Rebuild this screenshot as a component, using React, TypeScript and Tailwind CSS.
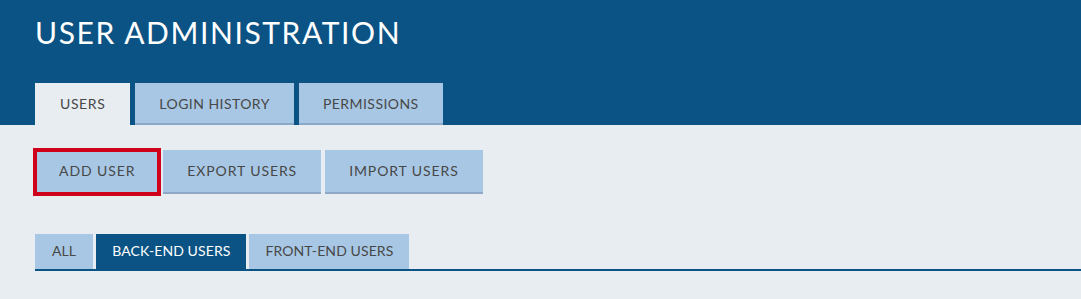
const PAGE_TABS = ["Users", "Login history", "Permissions"]
const ACTIONS = ["Add user", "Export users", "Import users"]
const FILTERS = ["All", "Back-end users", "Front-end users"]

export default function App() {
  const activeTab = "Users"
  const activeFilter = "Back-end users"

  return (
    <div className="min-h-[299px] bg-[#e8edf2] font-['Lato',sans-serif] uppercase text-[#474747]">
      <header className="bg-[#0b5384] px-[35px] pt-[14px]">
        <h1 className="text-[30px] leading-[36px] font-normal tracking-[1.6px] text-white">
          User Administration
        </h1>
        <nav className="mt-[33px] flex gap-[5px]">
          {PAGE_TABS.map((tab) =>
            tab === activeTab ? (
              <button
                key={tab}
                className="bg-[#e8edf2] px-[25px] pt-[11px] pb-[11px] text-sm leading-5 tracking-[0.6px] uppercase"
              >
                {tab}
              </button>
            ) : (
              <button
                key={tab}
                className="border-b-2 border-[#8aa9c9] bg-[#a8c7e4] px-6 pt-[11px] pb-[9px] text-sm leading-5 tracking-[0.45px] uppercase"
              >
                {tab}
              </button>
            )
          )}
        </nav>
      </header>

      <div className="pt-[25px] pl-[35px]">
        <div className="flex gap-1">
          {ACTIONS.map((action, index) => (
            <button
              key={action}
              className={
                index === 0
                  ? "border-b-2 border-[#8ea9c6] bg-[#a8c7e4] px-6 pt-[11px] pb-[11px] text-sm leading-5 tracking-[0.9px] uppercase outline-4 outline-offset-[-2px] outline-[#d0021b]"
                  : "border-b-2 border-[#8ea9c6] bg-[#a8c7e4] px-6 pt-[11px] pb-[11px] text-sm leading-5 tracking-[0.9px] uppercase"
              }
            >
              {action}
            </button>
          ))}
        </div>

        <div className="mt-10 flex gap-[3px] border-b-2 border-[#0b5384]">
          {FILTERS.map((filter) => (
            <button
              key={filter}
              className={
                filter === activeFilter
                  ? "bg-[#0b5384] px-4 pt-[7px] pb-[8px] text-sm leading-5 tracking-[0.1px] text-white uppercase"
                  : filter === "All"
                    ? "bg-[#a8c7e4] px-[17px] pt-[7px] pb-[8px] text-sm leading-5 tracking-[0.1px] uppercase"
                    : "bg-[#a8c7e4] px-4 pt-[7px] pb-[8px] text-sm leading-5 tracking-[0.1px] uppercase"
              }
            >
              {filter}
            </button>
          ))}
        </div>
      </div>
    </div>
  )
}
